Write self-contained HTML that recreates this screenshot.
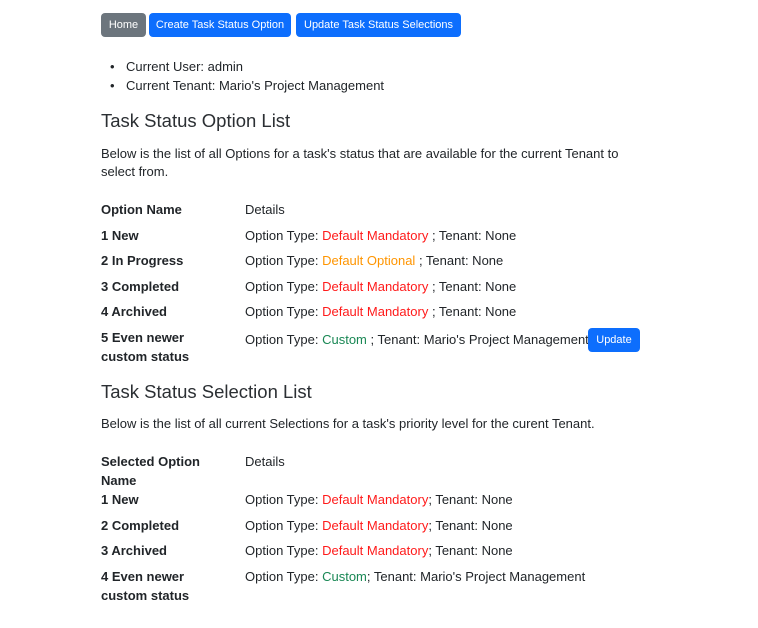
<!DOCTYPE html>
<html><head><meta charset="utf-8"><style>
body{margin:0;width:758px;height:628px;background:#fff;font-family:"Liberation Sans",sans-serif;font-size:13px;color:#212529;position:relative;overflow:hidden}
.a{position:absolute;white-space:nowrap;line-height:19px}
.btn{position:absolute;top:13px;height:24px;line-height:24px;color:#fff;background:#0d6efd;border-radius:4px;font-size:11px;text-align:center;white-space:nowrap}
b{font-weight:bold}
.r{color:#ff1a1a}.o{color:#ff9500}.g{color:#198754}
h2{position:absolute;margin:0;font-weight:normal;font-size:18.5px;left:101px;line-height:24px;color:#2b2f33}
</style></head><body>
<div class="btn" style="left:101px;width:45px;background:#6c757d">Home</div>
<div class="btn" style="left:149px;width:142px">Create Task Status Option</div>
<div class="btn" style="left:296px;width:165px">Update Task Status Selections</div>
<div class="a" style="left:110px;top:57px">•</div><div class="a" style="left:126px;top:57px">Current User: admin</div>
<div class="a" style="left:110px;top:76px">•</div><div class="a" style="left:126px;top:76px">Current Tenant: Mario's Project Management</div>
<h2 style="top:109px">Task Status Option List</h2>
<div class="a" style="left:101px;top:144px">Below is the list of all Options for a task's status that are available for the current Tenant to</div>
<div class="a" style="left:101px;top:162px">select from.</div>
<div class="a" style="left:101px;top:200px"><b>Option Name</b></div><div class="a" style="left:245px;top:200px">Details</div>
<div class="a" style="left:101px;top:226px"><b>1 New</b></div><div class="a" style="left:245px;top:226px">Option Type: <span class="r">Default Mandatory</span> ; Tenant: None</div>
<div class="a" style="left:101px;top:251px"><b>2 In Progress</b></div><div class="a" style="left:245px;top:251px">Option Type: <span class="o">Default Optional</span> ; Tenant: None</div>
<div class="a" style="left:101px;top:277px"><b>3 Completed</b></div><div class="a" style="left:245px;top:277px">Option Type: <span class="r">Default Mandatory</span> ; Tenant: None</div>
<div class="a" style="left:101px;top:302px"><b>4 Archived</b></div><div class="a" style="left:245px;top:302px">Option Type: <span class="r">Default Mandatory</span> ; Tenant: None</div>
<div class="a" style="left:101px;top:328px"><b>5 Even newer</b></div><div class="a" style="left:101px;top:347px"><b>custom status</b></div>
<div class="a" style="left:245px;top:330px">Option Type: <span class="g">Custom</span> ; Tenant: Mario's Project Management</div>
<div class="btn" style="left:588px;top:328px;width:52px">Update</div>
<h2 style="top:380px">Task Status Selection List</h2>
<div class="a" style="left:101px;top:414px">Below is the list of all current Selections for a task's priority level for the curent Tenant.</div>
<div class="a" style="left:101px;top:452px"><b>Selected Option</b></div><div class="a" style="left:101px;top:471px"><b>Name</b></div><div class="a" style="left:245px;top:452px">Details</div>
<div class="a" style="left:101px;top:490px"><b>1 New</b></div><div class="a" style="left:245px;top:490px">Option Type: <span class="r">Default Mandatory</span>; Tenant: None</div>
<div class="a" style="left:101px;top:516px"><b>2 Completed</b></div><div class="a" style="left:245px;top:516px">Option Type: <span class="r">Default Mandatory</span>; Tenant: None</div>
<div class="a" style="left:101px;top:541px"><b>3 Archived</b></div><div class="a" style="left:245px;top:541px">Option Type: <span class="r">Default Mandatory</span>; Tenant: None</div>
<div class="a" style="left:101px;top:567px"><b>4 Even newer</b></div><div class="a" style="left:101px;top:586px"><b>custom status</b></div>
<div class="a" style="left:245px;top:567px">Option Type: <span class="g">Custom</span>; Tenant: Mario's Project Management</div>
</body></html>
